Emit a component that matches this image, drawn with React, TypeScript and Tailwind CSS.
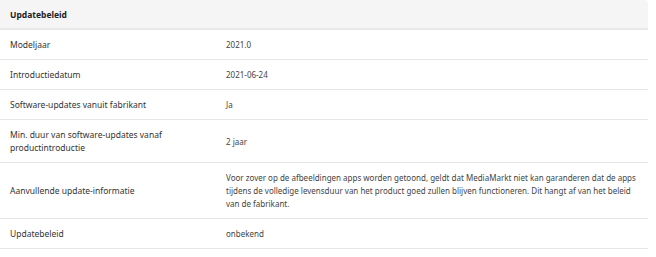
import React from 'react';

interface Row {
  label: string;
  value: string;
}

const rows: Row[] = [
  { label: 'Modeljaar', value: '2021.0' },
  { label: 'Introductiedatum', value: '2021-06-24' },
  { label: 'Software-updates vanuit fabrikant', value: 'Ja' },
  { label: 'Min. duur van software-updates vanaf productintroductie', value: '2 jaar' },
  {
    label: 'Aanvullende update-informatie',
    value:
      'Voor zover op de afbeeldingen apps worden getoond, geldt dat MediaMarkt niet kan garanderen dat de apps tijdens de volledige levensduur van het product goed zullen blijven functioneren. Dit hangt af van het beleid van de fabrikant.',
  },
  { label: 'Updatebeleid', value: 'onbekend' },
];

export default function App() {
  return (
    <div className="bg-white w-[656px] h-[257px]" style={{ fontFamily: '"Noto Sans", "Open Sans", sans-serif' }}>
      <div className="w-[648px]">
        {/* Header */}
        <div className="bg-[#f5f5f5] rounded-tr-[4px] border-b-2 border-[#e8e8e8] h-[30px] flex items-center px-[10px]">
          <span className="text-[8.5px] leading-[13px] font-bold text-[#222]">Updatebeleid</span>
        </div>
        {rows.map((r) => (
          <div key={r.label} className="flex border-b border-[#e6e6e6] leading-[13px] text-[#333]">
            <div className="w-[226px] shrink-0 pl-[10px] pr-4 py-[8px] flex items-center text-[8.5px]">
              <span className="max-w-[190px]">{r.label}</span>
            </div>
            <div className="flex-1 pr-1 py-[8px] flex items-center text-[8px] text-[#444]">
              <span>{r.value}</span>
            </div>
          </div>
        ))}
      </div>
    </div>
  );
}
